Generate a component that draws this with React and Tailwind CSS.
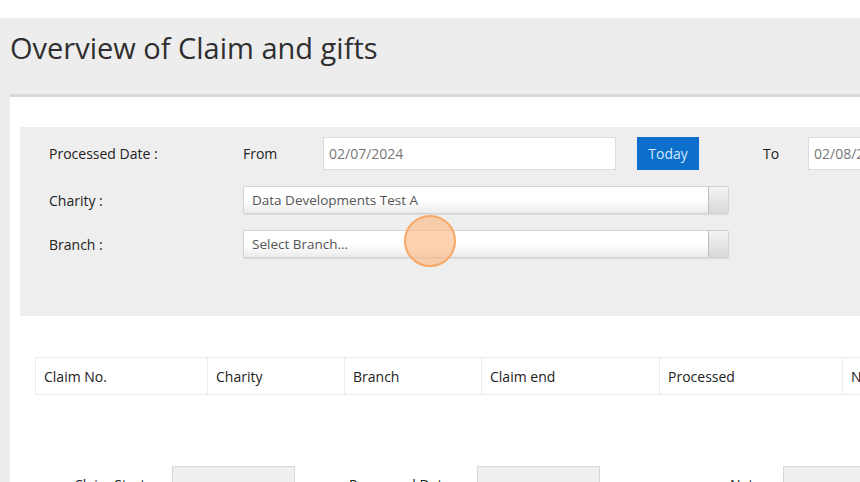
import React from 'react';

const columns = [
  { label: 'Claim No.', w: 'w-[171px]' },
  { label: 'Charity', w: 'w-[137px]' },
  { label: 'Branch', w: 'w-[137px]' },
  { label: 'Claim end', w: 'w-[178px]' },
  { label: 'Processed', w: 'w-[183px]' },
  { label: 'Net', w: 'w-[120px]' },
];

const SelectBox = ({ text, h }) => (
  <div className={`flex w-[486px] ${h} border border-[#d3d3d3] rounded-[2px] bg-gradient-to-b from-white via-white to-[#ececec] shadow-[0_1px_1px_rgba(0,0,0,0.08)]`}>
    <div className="flex-1 flex items-center pl-[8px] text-[13.5px] text-[#555]">{text}</div>
    <div className="w-[20px] border-l border-[#bdbdbd] bg-gradient-to-b from-[#f3f3f3] to-[#d9d9d9]" />
  </div>
);

const App = () => {
  return (
    <div className="w-[860px] h-[482px] overflow-hidden bg-white text-[#222]" style={{ fontFamily: '"Open Sans", "Liberation Sans", sans-serif' }}>
      <div className="h-[18px] bg-white" />
      <div className="bg-[#eeeded] pl-[10px] min-w-max">
        <div className="h-[76px] pt-[12px]">
          <h1 className="text-[29px] leading-[36px] text-[#2f2f2f] font-medium">Overview of Claim and gifts</h1>
        </div>
        <div className="w-[1000px] border-t-[3px] border-[#d5d8dc] bg-white pl-[10px] pt-[30px] h-[400px]">
          {/* filter panel */}
          <div className="relative bg-[#efeeee] h-[189px] pt-[10px] text-[14px]">
            <div className="flex items-center h-[33px]">
              <div className="w-[223px] pl-[29px]">Processed Date :</div>
              <div className="w-[80px]">From</div>
              <div className="w-[293px] h-[33px] bg-white border border-[#dcdcdc] flex items-center pl-[5px] text-[#777]">02/07/2024</div>
              <button className="ml-[21px] w-[62px] h-[33px] bg-[#0b6fcb] text-[#d6e7f8] text-[14px]">Today</button>
              <div className="w-[109px] pl-[64px]">To</div>
              <div className="w-[200px] h-[33px] bg-white border border-[#dcdcdc] flex items-center pl-[5px] text-[#777]">02/08/2024</div>
            </div>
            <div className="flex items-center mt-[16px]">
              <div className="w-[223px] pl-[29px]">Charity :</div>
              <SelectBox text="Data Developments Test A" h="h-[28px]" />
            </div>
            <div className="flex items-center mt-[16px]">
              <div className="w-[223px] pl-[29px]">Branch :</div>
              <SelectBox text="Select Branch..." h="h-[28px]" />
            </div>
            <div className="absolute left-[384px] top-[88px] w-[52px] h-[52px] rounded-full bg-[#fbb57f]/60 border-2 border-[#f7a866]" />
          </div>
          {/* table header */}
          <div className="ml-[15px] mt-[41px] flex h-[38px] border border-[#ececec] text-[14px] text-[#222]">
            {columns.map((c, i) => (
              <div key={c.label} className={`${c.w} flex items-center pl-[8px] ${i > 0 ? 'border-l border-[#ececec]' : ''}`}>{c.label}</div>
            ))}
          </div>
          {/* totals row */}
          <div className="flex mt-[71px] text-[14px]">
            <div className="w-[98px] ml-[54px] pt-[8px]">Claim Start</div>
            <div className="w-[123px] h-[33px] bg-[#efefef] border border-[#d8d8d8]" />
            <div className="w-[128px] ml-[54px] pt-[8px]">Processed Date</div>
            <div className="w-[123px] h-[33px] bg-[#efefef] border border-[#d8d8d8]" />
            <div className="w-[53px] ml-[130px] pt-[8px]">Net</div>
            <div className="w-[123px] h-[33px] bg-[#efefef] border border-[#d8d8d8]" />
          </div>
        </div>
      </div>
    </div>
  );
};

export default App;
